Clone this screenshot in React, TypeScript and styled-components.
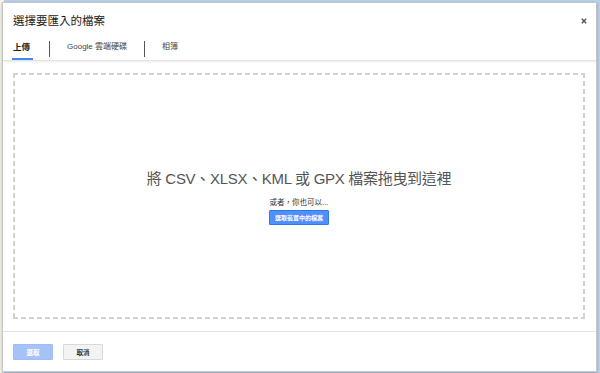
import styled, { createGlobalStyle } from "styled-components";

const GlobalStyle = createGlobalStyle`
  html, body {
    margin: 0;
    padding: 0;
    width: 600px;
    height: 373px;
    overflow: hidden;
    background: #f7f4ea;
    font-family: Arial, "Liberation Sans", "Noto Sans CJK TC", sans-serif;
  }
`;

const tabs = ["上傳", "Google 雲端硬碟", "相簿"];

const App = () => {
  return (
    <>
      <GlobalStyle />
      <Page>
        <Dialog>
          <Header>
            <TitleRow>
              <Title>選擇要匯入的檔案</Title>
              <Close aria-label="close">
                <svg width="6" height="6" viewBox="0 0 6 6">
                  <path d="M0.8 0.8 L5.2 5.2 M5.2 0.8 L0.8 5.2" stroke="#555" strokeWidth="1.5" />
                </svg>
              </Close>
            </TitleRow>
            <Tabs>
              {tabs.map((t, i) => (
                <TabGroup key={t}>
                  {i > 0 && <Divider />}
                  <Tab $active={i === 0}>{t}</Tab>
                </TabGroup>
              ))}
            </Tabs>
          </Header>
          <Body>
            <DropZone>
              <DropText>將 CSV、XLSX、KML 或 GPX 檔案拖曳到這裡</DropText>
              <OrText>或者，你也可以...</OrText>
              <PickButton>選取裝置中的檔案</PickButton>
            </DropZone>
          </Body>
          <Footer>
            <Button $primary>選取</Button>
            <Button>取消</Button>
          </Footer>
        </Dialog>
      </Page>
    </>
  );
};

export default App;

const Page = styled.div`
  width: 600px;
  height: 373px;
  box-sizing: border-box;
  padding: 2px 3px 1px 2px;
  background: linear-gradient(90deg, #f7f4ea 0 4px, #b9d2ee 4px);
  display: flex;
`;

const Dialog = styled.div`
  flex: 1;
  display: flex;
  flex-direction: column;
  background: #fff;
  border: 1px solid #c8c8c8;
  box-shadow: 0 1px 3px rgba(0, 0, 0, 0.25);
`;

const Header = styled.div`
  height: 58px;
  box-sizing: border-box;
  border-bottom: 1px solid #e3e3e3;
  box-shadow: 0 1px 2px rgba(0, 0, 0, 0.08);
  display: flex;
  flex-direction: column;
`;

const TitleRow = styled.div`
  display: flex;
  align-items: center;
  justify-content: space-between;
  padding: 11px 8px 0 10px;
`;

const Title = styled.div`
  font-size: 11.5px;
  line-height: 14px;
  color: #222;
`;

const Close = styled.div`
  width: 6px;
  height: 6px;
  display: flex;
  margin-right: 1px;
`;

const Tabs = styled.div`
  display: flex;
  align-items: stretch;
  margin-top: 11px;
  padding-left: 10px;
  height: 22px;
`;

const TabGroup = styled.div`
  display: flex;
  align-items: stretch;
`;

const Divider = styled.div`
  width: 1px;
  height: 16px;
  margin: 2px 0 0;
  background: #555;
`;

const Tab = styled.div<{ $active?: boolean }>`
  font-size: ${(p) => (p.$active ? "8.5px" : "8px")};
  line-height: 16px;
  padding: 0 17px 0 17px;
  color: ${(p) => (p.$active ? "#222" : "#444")};
  font-weight: ${(p) => (p.$active ? "bold" : "normal")};
  box-sizing: border-box;
  position: relative;
  ${(p) =>
    p.$active &&
    `
    padding: 0 19px 0 0;
    &::after {
      content: "";
      position: absolute;
      left: -1px;
      width: 21px;
      bottom: 0;
      height: 2px;
      background: #4285f4;
    }
  `}
`;

const Body = styled.div`
  flex: 1;
  display: flex;
  border-bottom: 1px solid #e5e5e5;
`;

const dash = "#d2d2d2";

const DropZone = styled.div`
  flex: 1;
  margin: 12px 11px 12px 10px;
  background-image: repeating-linear-gradient(90deg, ${dash} 0 5px, transparent 5px 8px),
    repeating-linear-gradient(90deg, ${dash} 0 5px, transparent 5px 8px),
    repeating-linear-gradient(180deg, ${dash} 0 5px, transparent 5px 8px),
    repeating-linear-gradient(180deg, ${dash} 0 5px, transparent 5px 8px);
  background-size: 100% 2px, 100% 2px, 2px 100%, 2px 100%;
  background-position: top left, bottom left, top left, top right;
  background-repeat: no-repeat;
  display: flex;
  flex-direction: column;
  align-items: center;
  justify-content: center;
`;

const DropText = styled.div`
  font-size: 15px;
  letter-spacing: -0.3px;
  color: #555;
  line-height: 20px;
  margin-top: 2px;
`;

const OrText = styled.div`
  font-size: 7.5px;
  color: #333;
  margin-top: 9px;
  line-height: 9px;
`;

const PickButton = styled.div`
  margin-top: 3px;
  width: 60px;
  height: 15px;
  box-sizing: border-box;
  background: #4d90fe;
  border: 1px solid #3079ed;
  color: #fff;
  font-size: 6px;
  font-weight: bold;
  display: flex;
  align-items: center;
  justify-content: center;
  border-radius: 1px;
`;

const Footer = styled.div`
  height: 39px;
  display: flex;
  align-items: center;
  gap: 10px;
  padding: 0 0 0 10px;
`;

const Button = styled.div<{ $primary?: boolean }>`
  width: 40px;
  height: 16px;
  box-sizing: border-box;
  display: flex;
  align-items: center;
  justify-content: center;
  font-size: 6.5px;
  font-weight: bold;
  border-radius: 1px;
  background: ${(p) => (p.$primary ? "#a6c3f8" : "#f3f3f3")};
  border: 1px solid ${(p) => (p.$primary ? "#9fbdf2" : "#d8d8d8")};
  color: ${(p) => (p.$primary ? "#fff" : "#333")};
`;
